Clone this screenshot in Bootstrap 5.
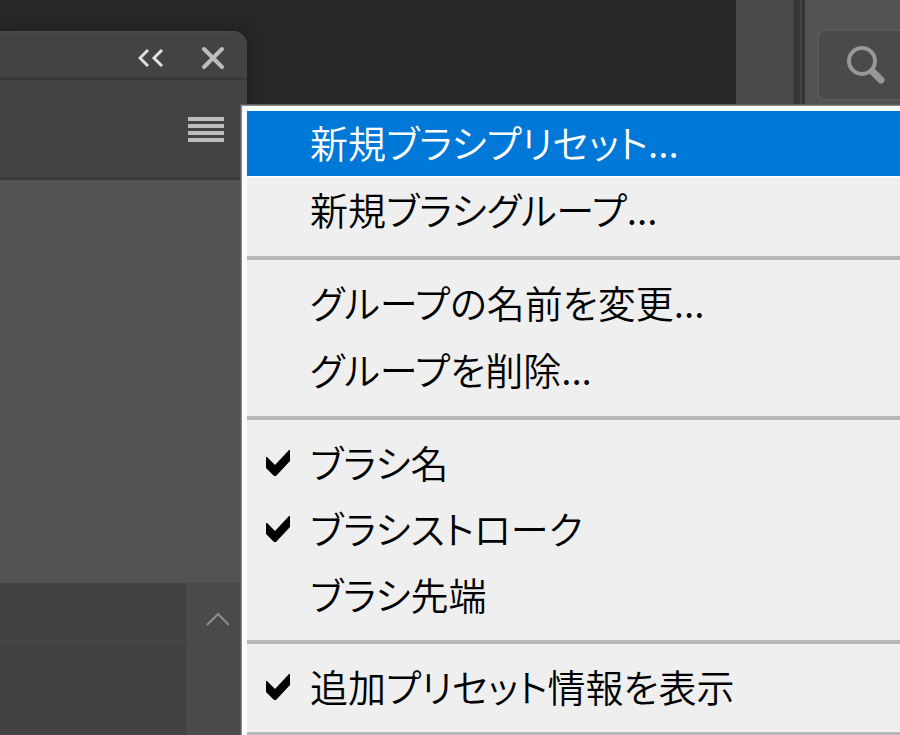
<!DOCTYPE html>
<html lang="ja">
<head>
<meta charset="utf-8">
<meta name="viewport" content="width=device-width, initial-scale=1">
<title>ブラシ</title>
<link href="https://cdn.jsdelivr.net/npm/bootstrap@5.3.0/dist/css/bootstrap.min.css" rel="stylesheet">
<style>
  body { background: #282828; font-family: "Noto Sans CJK JP", sans-serif; }
  .brush-panel { width: 247px; margin-top: 31px; background: #535353; border-top-right-radius: 14px; overflow: hidden; box-shadow: 0 0 16px #1c1c1c; }
  .panel-top { height: 49px; background: #434343; border-top: 2px solid #494949; border-bottom: 3px solid #393939; padding: 6px 22px 0 0; gap: 37px; }
  .panel-tabs { height: 100px; background: #434343; border-bottom: 3px solid #393939; padding: 2px 23px 0 0; }
  .icon-btn { background: none; border: 0; padding: 0; display: flex; }
  .panel-view { height: 403px; }
  .brush-list { background: #424242; }
  .brush-row { height: 60px; border-bottom: 2px solid #464646; }
  .scroll-lane { width: 61px; background: #4a4a4a; padding: 29px 17px 0 20px; }
  .dock { width: 164px; background: #535353; }
  .dock-strip { width: 57px; background: #4a4a4a; }
  .dock-split { width: 12px; background: #383838; border-right: 3px solid #353535; border-left: 1px solid #404040; box-shadow: inset -2px 0 #424242; }
  .search-box { height: 72px; margin: 29px 0 0 12px; background: #4a4a4a; border: 2px solid #595959; border-right: 0; border-radius: 9px 0 0 9px; padding-left: 27px; }
  .search-box input { background: none; border: 0; outline: 0; min-width: 0; color: #ddd; }
  .flyout.dropdown-menu { top: 105px; left: 241px; right: 0; bottom: 0; background: #efefef; border: 1px solid #8c8c8c; border-width: 1px 0 0 1px; border-radius: 0; padding: 5px 0 0 5px; overflow: hidden; box-shadow: inset 5px 5px #fbfbfb, -1px -1px #5c5c5c; }
  .flyout .dropdown-item { height: 67px; padding: 0 0 0 16px; font-size: 38px; line-height: 60px; font-weight: 350; font-feature-settings: "palt"; color: #000; }
  .flyout .dropdown-item.check-item { height: 66px; }
  .flyout .dropdown-item.active { color: #fff; background: #0078d7; border-bottom: 2px solid #fbfbfb; border-top: 1px solid #0078d7; }
  .item-text { padding-bottom: 5px; }
  .tick { width: 30px; height: 30px; margin-right: 17px; flex: none; }
  .flyout .dropdown-divider { margin: 11px 0; border-top: 4px solid #b8b8b8; opacity: 1; }
</style>
<script src="https://cdn.jsdelivr.net/npm/bootstrap@5.3.0/dist/js/bootstrap.bundle.min.js"></script>
</head>
<body>
<div class="d-flex vh-100 position-relative overflow-hidden">
  <section class="brush-panel d-flex flex-column flex-shrink-0" aria-label="ブラシ">
    <header class="panel-top d-flex align-items-center justify-content-end flex-shrink-0">
      <button type="button" class="icon-btn" aria-label="折りたたむ">
        <svg width="26" height="18" viewBox="0 0 26 18" fill="none" stroke="#dedede" stroke-width="3"><path d="M10 1 2 9l8 8M24 1l-8 8 8 8"/></svg>
      </button>
      <button type="button" class="icon-btn" aria-label="閉じる">
        <svg width="24" height="24" viewBox="0 0 24 24" fill="none" stroke="#bcbcbc" stroke-width="4" stroke-linecap="round"><path d="m3 3 18 18M21 3 3 21"/></svg>
      </button>
    </header>
    <div class="panel-tabs d-flex align-items-center justify-content-end flex-shrink-0">
      <button type="button" class="icon-btn" aria-label="メニュー">
        <svg width="36" height="28" viewBox="0 0 36 28" fill="#bdbdbd"><path d="M0 1h36v4H0zM0 8h36v4H0zM0 15h36v4H0zM0 22h36v4H0z"/></svg>
      </button>
    </div>
    <div class="panel-view flex-shrink-0"></div>
    <div class="d-flex flex-grow-1">
      <div class="brush-list flex-grow-1"><div class="brush-row"></div></div>
      <div class="scroll-lane">
        <button type="button" class="icon-btn" aria-label="上へスクロール">
          <svg width="24" height="14" viewBox="0 0 24 14" fill="none" stroke="#8c8c8c" stroke-width="2"><path d="M1 13 12 2l11 11"/></svg>
        </button>
      </div>
    </div>
  </section>

  <main class="flex-grow-1"></main>

  <aside class="dock d-flex flex-shrink-0">
    <div class="dock-strip flex-shrink-0"></div>
    <div class="dock-split flex-shrink-0"></div>
    <div class="flex-grow-1">
      <div class="search-box d-flex align-items-center">
        <svg class="flex-shrink-0" width="40" height="38" viewBox="0 0 40 38" fill="none" stroke="#989898"><circle cx="16" cy="15" r="13" stroke-width="4"/><path d="m27 26 8 8" stroke-width="7" stroke-linecap="round"/></svg>
        <input type="text" class="w-100" aria-label="検索">
      </div>
    </div>
  </aside>

  <div class="flyout dropdown-menu show" role="menu">
    <button type="button" role="menuitem" class="dropdown-item active d-flex align-items-center"><span class="tick"></span><span class="item-text">新規ブラシプリセット...</span></button>
    <button type="button" role="menuitem" class="dropdown-item d-flex align-items-center"><span class="tick"></span><span class="item-text">新規ブラシグループ...</span></button>
    <hr class="dropdown-divider">
    <button type="button" role="menuitem" class="dropdown-item d-flex align-items-center"><span class="tick"></span><span class="item-text">グループの名前を変更...</span></button>
    <button type="button" role="menuitem" class="dropdown-item d-flex align-items-center"><span class="tick"></span><span class="item-text">グループを削除...</span></button>
    <hr class="dropdown-divider">
    <button type="button" role="menuitemcheckbox" aria-checked="true" class="dropdown-item check-item d-flex align-items-center"><svg class="tick" viewBox="0 0 30 30"><path d="M3 8h1l8 8L26 1h1v11L13 27h-2l-8-8z"/></svg><span class="item-text">ブラシ名</span></button>
    <button type="button" role="menuitemcheckbox" aria-checked="true" class="dropdown-item check-item d-flex align-items-center"><svg class="tick" viewBox="0 0 30 30"><path d="M3 8h1l8 8L26 1h1v11L13 27h-2l-8-8z"/></svg><span class="item-text">ブラシストローク</span></button>
    <button type="button" role="menuitemcheckbox" aria-checked="false" class="dropdown-item check-item d-flex align-items-center"><span class="tick"></span><span class="item-text">ブラシ先端</span></button>
    <hr class="dropdown-divider">
    <button type="button" role="menuitemcheckbox" aria-checked="true" class="dropdown-item check-item d-flex align-items-center"><svg class="tick" viewBox="0 0 30 30"><path d="M3 8h1l8 8L26 1h1v11L13 27h-2l-8-8z"/></svg><span class="item-text">追加プリセット情報を表示</span></button>
    <hr class="dropdown-divider">
  </div>
</div>
</body>
</html>
